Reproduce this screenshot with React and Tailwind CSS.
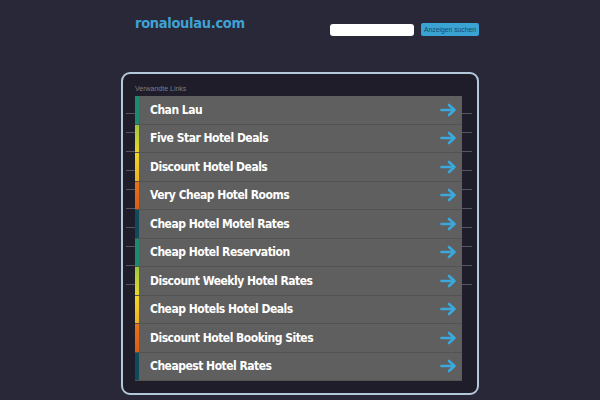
import React from 'react';

const links = [
  { label: 'Chan Lau', strip: 'bg-[#1d8a70]' },
  { label: 'Five Star Hotel Deals', strip: 'bg-gradient-to-b from-[#9cc83c] to-[#e8d52a]' },
  { label: 'Discount Hotel Deals', strip: 'bg-gradient-to-b from-[#f0d428] to-[#eeb224]' },
  { label: 'Very Cheap Hotel Rooms', strip: 'bg-gradient-to-b from-[#e8721a] to-[#d85e10]' },
  { label: 'Cheap Hotel Motel Rates', strip: 'bg-[#0f4a5a]' },
  { label: 'Cheap Hotel Reservation', strip: 'bg-[#1d8a70]' },
  { label: 'Discount Weekly Hotel Rates', strip: 'bg-gradient-to-b from-[#9cc83c] to-[#e8d52a]' },
  { label: 'Cheap Hotels Hotel Deals', strip: 'bg-gradient-to-b from-[#f0d428] to-[#eeb224]' },
  { label: 'Discount Hotel Booking Sites', strip: 'bg-gradient-to-b from-[#e8721a] to-[#d85e10]' },
  { label: 'Cheapest Hotel Rates', strip: 'bg-[#0f4a5a]' },
];

const Arrow = () => (
  <svg width="17" height="14" viewBox="0 0 17 14" fill="none">
    <path d="M1.5 7h12.5M9 2l5.5 5-5.5 5" stroke="#3aa8dc" strokeWidth="2.6" strokeLinecap="round" strokeLinejoin="round" />
  </svg>
);

export default function App() {
  return (
    <div className="w-[600px] h-[400px] bg-[#292838] overflow-hidden font-['DejaVu_Sans',sans-serif]">
      <div className="w-[358px] mx-auto">
        <header className="h-[72px] flex items-start justify-between pl-[14px]">
          <h1 className="mt-[13px] text-[14.5px] tracking-[-0.3px] font-bold font-stretch-condensed text-[#3fa2d4] leading-[20px] font-['DejaVu_Sans_Condensed','DejaVu_Sans',sans-serif]">
            ronaloulau.com
          </h1>
          <div className="mt-[23px] flex items-center gap-[7px]">
            <input type="text" className="w-[84px] h-[12px] bg-white rounded-[3px] outline-none" />
            <button className="h-[13px] w-[58px] bg-[#3ba3d4] rounded-[2px] text-[6.8px] leading-[13px] text-[#174a68] font-['Liberation_Sans',sans-serif]">
              Anzeigen suchen
            </button>
          </div>
        </header>

        <div className="h-[323px] border-2 border-[#b4c8dc] rounded-[9px] bg-[#1e1d29] pt-[8px] pl-[12px] pr-[15px]">
          <div className="h-[14px] text-[7px] leading-[14px] text-[#7d7c8a] font-['Liberation_Sans',sans-serif]">
            Verwandte Links
          </div>
          <div className="-ml-[9px] pl-[9px] -mr-[10px] pr-[10px] bg-[image:repeating-linear-gradient(to_bottom,transparent_0_17px,#555462_17px_18px,transparent_18px_19px)] bg-[length:100%_190px] bg-no-repeat">
            {links.map((l) => (
              <div key={l.label} className="h-[28.5px] flex bg-[#5f5f5f] border-b border-[#535353]">
                <div className={`w-[4px] ${l.strip}`} />
                <div className="flex-1 flex items-center justify-between pl-[11px] pr-[5px]">
                  <span className="text-[12px] tracking-[-0.5px] font-bold font-stretch-condensed text-white font-['DejaVu_Sans_Condensed','DejaVu_Sans',sans-serif]">
                    {l.label}
                  </span>
                  <Arrow />
                </div>
              </div>
            ))}
          </div>
        </div>
      </div>
    </div>
  );
}
